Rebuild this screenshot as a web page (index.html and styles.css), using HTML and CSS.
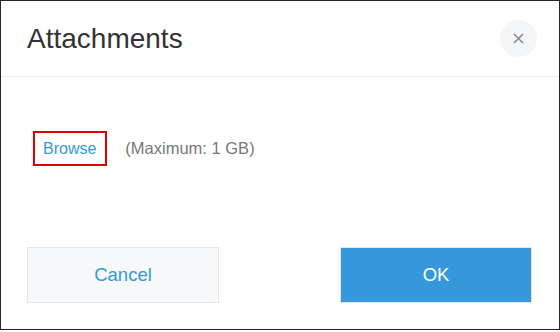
FILE: index.html
```html
<!DOCTYPE html>
<html lang="en">
<head>
  <meta charset="UTF-8" />
  <title>Attachments</title>
  <link rel="stylesheet" href="styles.css">
</head>
<body>
  <div class="dialog">
    <div class="dialog-header">
      <h1>Attachments</h1>
      <button class="close" aria-label="Close">
        <svg width="11" height="11" viewBox="0 0 11 11">
          <path d="M1 1 L10 10 M10 1 L1 10" stroke="#8a8a8a" stroke-width="1.6" fill="none"/>
        </svg>
      </button>
    </div>

    <div class="dialog-body">
      <a href="#" class="browse">Browse</a>
      <span class="limit">(Maximum: 1 GB)</span>
    </div>

    <div class="dialog-footer">
      <button class="btn btn-cancel">Cancel</button>
      <button class="btn btn-ok">OK</button>
    </div>
  </div>
</body>
</html>
```

FILE: styles.css
```css
body {
  margin: 0;
  background-color: white;
  font-family: "Liberation Sans", Arial, sans-serif;
}
.dialog {
  width: 560px;
  height: 330px;
  box-sizing: border-box;
  border: 1px solid #262626;
  background-color: white;
}
.dialog-header {
  height: 75px;
  display: flex;
  align-items: center;
  justify-content: space-between;
  padding: 0 22px 0 26px;
  border-bottom: 1px solid #ececec;
}
.dialog-header h1 {
  margin: 0;
  font-size: 28px;
  line-height: 32px;
  font-weight: normal;
  color: #333;
}
.close {
  width: 37px;
  height: 37px;
  padding: 0;
  border: none;
  border-radius: 50%;
  background-color: #f5f6f8;
  display: flex;
  align-items: center;
  justify-content: center;
  cursor: pointer;
}
.dialog-body {
  display: flex;
  align-items: center;
  padding: 54px 32px 0;
}
.browse {
  display: block;
  height: 31px;
  line-height: 31px;
  padding: 0 9px 0 8px;
  border: 2px solid #e50000;
  color: #3498db;
  font-size: 16px;
  text-decoration: none;
}
.limit {
  margin-left: 18px;
  color: #777;
  font-size: 16.5px;
}
.dialog-footer {
  display: flex;
  justify-content: space-between;
  padding: 81px 27px 0 26px;
}
.btn {
  width: 192px;
  height: 56px;
  box-sizing: border-box;
  border: 1px solid #e3e7e8;
  font-family: "Liberation Sans", Arial, sans-serif;
  font-size: 18.5px;
  cursor: pointer;
}
.btn-cancel {
  background-color: #f7f9fa;
  color: #3498db;
}
.btn-ok {
  background-color: #3498db;
  color: white;
}
```
